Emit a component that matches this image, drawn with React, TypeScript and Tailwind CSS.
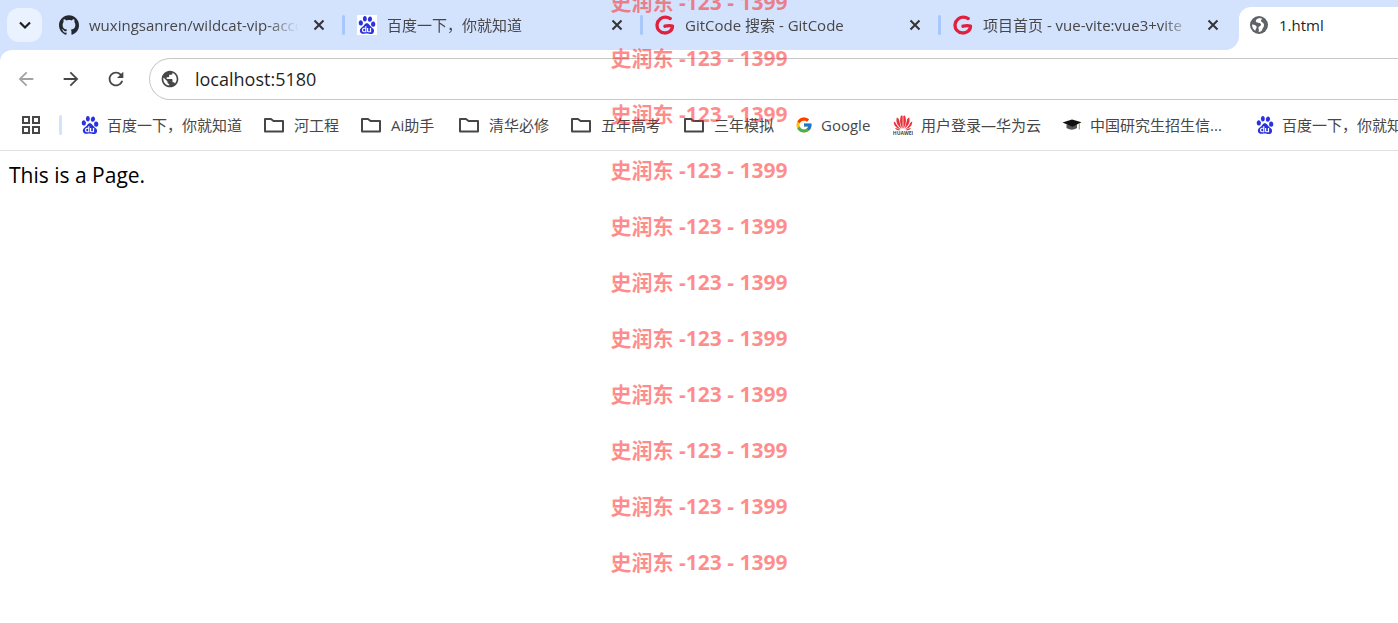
import type { ReactNode } from 'react';
import { FcGoogle } from 'react-icons/fc';
import { MdArrowBack, MdArrowForward, MdPublic, MdRefresh } from 'react-icons/md';
import { SiBaidu, SiGithub } from 'react-icons/si';

function GitCodeIcon() {
  return (
    <svg viewBox="0 0 20 20" className="size-5" fill="none" stroke="#e0203f" strokeLinecap="round" strokeLinejoin="round">
      <path d="M15.2 3.6 C12.5 1.600 8.200 1.500 5.400 3.700 C1.500 6.700 1 12 3.800 15.300 C6.700 18.700 12 18.700 15 16.300 C16.700 15 17.500 13 17.500 11 C15 10.300 12.500 10.500 10 11.200" strokeWidth="3.300" />
    </svg>
  );
}

function TabGlobeIcon() {
  return (
    <svg viewBox="0 0 20 20" className="size-5">
      <circle cx="10" cy="10" r="9" fill="#5f6368" />
      <path d="M10.500 3 C7.500 4 6 5.500 7.300 7 C8.500 8.300 11.500 7.500 12 9.300 C12.500 11 10 11 9.500 12.500 C9.200 14 10.500 14.500 9.600 17 C11.500 17 13 16 13.300 14.500 C13.700 12.500 15.300 12 15 9.800 C14.700 7.300 12 7.300 12 5.800 C12 4.600 13.200 4.500 13.300 3.800 Z" fill="#fff" />
      <path d="M3 9.500 C5 9.300 7.500 10.500 7.700 12 C7.800 13.400 6.500 13.500 6.400 15.800 C4.300 14.600 3 12.500 3 9.500 Z" fill="#fff" />
    </svg>
  );
}

function CloseIcon() {
  return (
    <svg viewBox="0 0 16 16" className="size-4" fill="none" stroke="#333" strokeWidth="2">
      <path d="M3.500 3.500 L12.500 12.500 M12.500 3.500 L3.500 12.500" />
    </svg>
  );
}

function ChevronIcon() {
  return (
    <svg viewBox="0 0 20 20" className="size-5" fill="none" stroke="currentColor" strokeWidth="2.200">
      <path d="M5 7.500 L10 12.500 L15 7.500" />
    </svg>
  );
}

function FolderIcon() {
  return (
    <svg viewBox="0 0 24 20" className="h-5 w-6" fill="none" stroke="#474747" strokeWidth="2" strokeLinejoin="round">
      <path d="M3 4 H9 L11.500 6 H21 V16.500 H3 Z" />
    </svg>
  );
}

function HuaweiIcon() {
  return (
    <svg viewBox="0 0 20 20" className="size-5" fill="#e8323c">
      <path d="M9.600 13.800 C7 10 6.300 5 8 .8 Q9.300 0 9.700 1.200 Z" />
      <path d="M10.400 13.800 C13 10 13.700 5 12 .8 Q10.700 0 10.300 1.200 Z" />
      <path d="M8.700 13.800 C4.500 11 2.500 7 3.800 2.600 Q6 3 6.500 7 Q7.200 11 8.700 13.800 Z" />
      <path d="M11.300 13.800 C15.500 11 17.500 7 16.200 2.600 Q14 3 13.500 7 Q12.800 11 11.300 13.800 Z" />
      <path d="M8 14.200 C3.500 13.300 .5 10.500 .8 6.500 Q2.500 7 3.500 9.500 Q5 12.500 8 14.200 Z" />
      <path d="M12 14.200 C16.500 13.300 19.500 10.500 19.200 6.500 Q17.500 7 16.500 9.500 Q15 12.500 12 14.200 Z" />
      <path d="M7.500 15 Q4 16 1.800 13 Q4.500 13.200 7.500 15 Z" />
      <path d="M12.500 15 Q16 16 18.200 13 Q15.500 13.200 12.500 15 Z" />
      <text x="10" y="20" fontSize="5" fontWeight="700" textAnchor="middle" fill="#444">HUAWEI</text>
    </svg>
  );
}

function CapIcon() {
  return (
    <svg viewBox="0 0 20 20" className="size-5">
      <path d="M4.500 9.500 V13 Q10 16.500 15 13 V9.500 Z" fill="#555" />
      <path d="M.5 7.600 L10 4.500 L19.500 7.200 L10.500 11.800 Z" fill="#111" />
      <path d="M17.300 8.500 V14.500" stroke="#b98d2f" />
    </svg>
  );
}

function AppsIcon() {
  return (
    <svg viewBox="0 0 18 18" className="size-[18px]" fill="none" stroke="#474747" strokeWidth="2">
      <path d="M1 1h6v6h-6zM11 1h6v6h-6zM1 11h6v6h-6zM11 11h6v6h-6z" />
    </svg>
  );
}

const tabs: { title: string; icon: ReactNode }[] = [
  { title: 'wuxingsanren/wildcat-vip-account', icon: <SiGithub className="size-5 text-[#24292f]" /> },
  { title: '百度一下，你就知道', icon: <span className="bg-white p-px"><SiBaidu className="size-[18px] text-[#2932e1]" /></span> },
  { title: 'GitCode 搜索 - GitCode', icon: <GitCodeIcon /> },
  { title: '项目首页 - vue-vite:vue3+vite', icon: <GitCodeIcon /> },
];

const baidu = <SiBaidu className="size-[18px] text-[#2932e1]" />;

const bookmarks: { title: string; icon: ReactNode; className: string }[] = [
  { title: '百度一下，你就知道', icon: baidu, className: 'w-[181px]' },
  { title: '河工程', icon: <FolderIcon />, className: 'w-[97px]' },
  { title: 'Ai助手', icon: <FolderIcon />, className: 'w-[98px]' },
  { title: '清华必修', icon: <FolderIcon />, className: 'w-[112px]' },
  { title: '五年高考', icon: <FolderIcon />, className: 'w-[113px]' },
  { title: '三年模拟', icon: <FolderIcon />, className: 'w-[113px]' },
  { title: 'Google', icon: <FcGoogle className="size-[18px]" />, className: 'w-[98px]' },
  { title: '用户登录—华为云', icon: <HuaweiIcon />, className: 'w-[169px]' },
  { title: '中国研究生招生信...', icon: <CapIcon />, className: 'w-[194px]' },
  { title: '百度一下，你就知道', icon: baidu, className: 'w-[181px]' },
];

const watermarks = Array.from({ length: 11 }, (_, i) => i);

export default function App() {
  return (
    <div className="relative min-h-screen overflow-hidden bg-white font-['Open_Sans','Noto_Sans_CJK_SC',sans-serif] text-[#474747]">
      <header className="bg-[#d3e2fd]">
        <div className="flex h-[50px] items-end overflow-hidden">
          <button aria-label="搜索标签页" className="mr-[5px] mb-2 ml-[7px] flex h-[34px] w-[35px] shrink-0 items-center justify-center rounded-xl bg-[#ebf2ff] text-[#1f1f1f]">
            <ChevronIcon />
          </button>
          <div role="tablist" className="flex h-[43px] items-stretch">
            {tabs.map((tab, i) => (
              <div key={tab.title} className="flex w-[298px] shrink-0 items-center pb-[7px] pl-3">
                <button role="tab" aria-selected={false} className="flex shrink-0 items-center gap-[10px] text-left text-[15px]">
                  <span className="flex size-5 shrink-0 items-center justify-center">{tab.icon}</span>
                  <span className="w-[210px] overflow-hidden whitespace-nowrap [mask-image:linear-gradient(to_right,black_85%,transparent)]">
                    {tab.title}
                  </span>
                </button>
                <button aria-label="关闭" className="ml-3 shrink-0">
                  <CloseIcon />
                </button>
                {i < tabs.length - 1 && <span className="ml-[15px] h-5 w-[3px] shrink-0 rounded-full bg-[#a8c7fa]" />}
              </div>
            ))}
            <div className="relative flex w-[298px] shrink-0">
              <svg viewBox="0 0 14 14" className="absolute bottom-0 -left-3.5 size-3.5" fill="#fff">
                <path d="M14 0 V14 H0 A14 14 0 0 0 14 0 Z" />
              </svg>
              <button role="tab" aria-selected className="flex flex-1 items-center gap-[10px] rounded-tl-xl bg-white pb-[7px] pl-[10px] text-left text-[15px] text-[#1f1f1f]">
                <TabGlobeIcon />
                1.html
              </button>
            </div>
          </div>
        </div>

        <div className="rounded-tl-xl border-b border-[#e0e0e0] bg-white">
          <div className="flex h-[50px] items-start pt-2">
            <div className="flex h-[42px] w-[149px] shrink-0 items-center gap-[23px] pl-[15px]">
              <button aria-label="后退"><MdArrowBack className="size-[22px] text-[#a3a3a3]" /></button>
              <button aria-label="前进"><MdArrowForward className="size-[22px]" /></button>
              <button aria-label="重新加载"><MdRefresh className="size-[22px]" /></button>
            </div>
            <div className="flex h-[42px] flex-1 items-center gap-[15px] rounded-l-full border border-r-0 border-[#c7c7c7] pl-[10px]">
              <MdPublic className="size-5" />
              <input aria-label="地址" defaultValue="localhost:5180" className="flex-1 text-lg text-[#1f1f1f] outline-none" />
            </div>
          </div>
          <nav className="flex h-[50px] items-center overflow-hidden pl-[22px] text-[15px]">
            <button aria-label="应用" className="shrink-0"><AppsIcon /></button>
            <span className="mx-[19px] h-5 w-[3px] shrink-0 rounded-full bg-[#d3e2fd]" />
            {bookmarks.map((b, i) => (
              <a key={i} href="#" className={`${b.className} flex shrink-0 items-center gap-2 whitespace-nowrap`}>
                {b.icon}
                {b.title}
              </a>
            ))}
          </nav>
        </div>
      </header>

      <main className="px-[9px] py-2 text-[21px] leading-8 text-black">This is a Page.</main>

      <div aria-hidden className="pointer-events-none absolute inset-x-0 -top-[26px] flex flex-col items-center text-[21px] font-bold text-[#ff1a1a]/50">
        {watermarks.map((i) => (
          <span key={i} className="h-14 leading-[56px] whitespace-pre">史润东 -123 - 1399</span>
        ))}
      </div>
    </div>
  );
}
